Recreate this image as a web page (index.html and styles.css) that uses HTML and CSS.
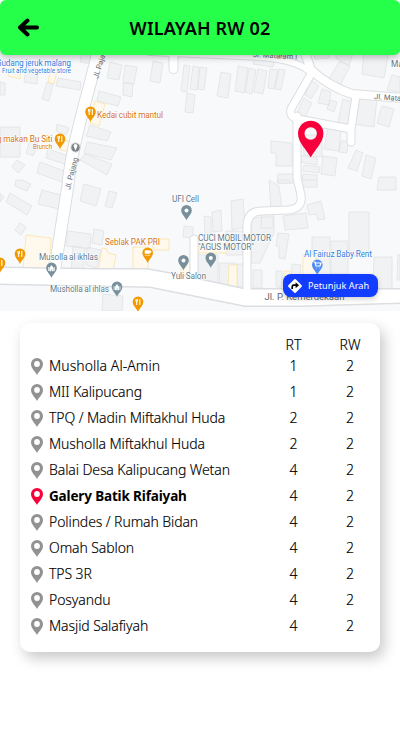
FILE: index.html
```html
<!DOCTYPE html>
<html lang="id">
<head>
<meta charset="utf-8">
<meta name="viewport" content="width=device-width, initial-scale=1">
<title>Wilayah RW 02</title>
<link rel="stylesheet" href="styles.css">
</head>
<body>
<header class="topbar">
  <svg class="back" width="24" height="20" viewBox="0 0 24 20"><path d="M21 9.500H4M11.500 2.500L4 9.500l7.500 7" fill="none" stroke="#000" stroke-width="4" stroke-linecap="round" stroke-linejoin="round"/></svg>
  <h1>WILAYAH RW 02</h1>
</header>

<section class="map">
<svg class="map-art" width="400" height="261" viewBox="0 50 400 261">
  <defs>
    <path id="drop" d="M0 0C-.8-3-5.300-6-5.300-10.200a5.300 5.300 0 0 1 10.600 0C5.300-6 .8-3 0 0Z"/>
    <g id="food"><use href="#drop" fill="#f29900"/><path d="M-2-13v2.500M-.6-13v2.500M-1.300-11v4M1.800-13v6" stroke="#fff" stroke-width="1.100"/></g>
    <g id="place"><use href="#drop" fill="#78909c"/><circle cy="-10" r="2" fill="#fff"/></g>
    <g id="mosque"><use href="#drop" fill="#78909c"/><path d="M-3-7v-4M3-7v-4M-1.800-7v-3L0-12.500 1.800-10v3H.6v-2H-.6v2Z" fill="#fff" stroke="#fff" stroke-width=".7"/></g>
  </defs>
  <rect y="50" width="400" height="261" fill="#f8f9fb"/>
  <g class="building">
    <path d="M82 50h12l-1 14-13-2ZM26 67l12 2-1 15-13-2ZM58 78l23 4-1 8-24-4ZM47 82l6 2-4 17-7-2ZM0 82l5 1v12H0ZM110 62l12 3-3 15-12-2ZM125 65l12 2-3 17-11-2ZM123 83l10 1-1 13-9-2ZM99 91l22 6-3 9-21-5ZM90 125l21 7-4 9-21-5ZM87 142l30 6-6 12-27-7ZM85 154l27 10-5 11-27-15ZM57 124l12 4-3 7-10-4ZM0 127h20v30H0ZM30 140l8 4-5 12-7-3ZM48 149l21 7-4 8-19-6ZM17 160l8 5-7 8-6-6ZM40 162l27 10-5 10-25-9Z"/>
    <path d="M153 61l10 2-3 20-10-2ZM184 65l6 1-3 26-6-1ZM193 66l6 1-2 23-7-1ZM200 67l7 1-3 22-6-1ZM187 93l8 2-2 18-8-1ZM221 72l10 2-3 24-11-2ZM238 66l10 2-4 25-9-2ZM249 68l7 2-4 24-7-2ZM258 69l9 2-4 23-9-2ZM270 69l8 1-4 19-6-1ZM279 69l6 1-4 20-6-1ZM254 59l20 2-1 6-20-3Z"/>
    <path d="M312 45h21l-4 13-14 1ZM340 61l10 5-10 20-12-6ZM336 50h18l-5 16-13-8ZM364 50h25l-5 28-22-4ZM392 75l8 2v15l-13-2ZM311 80l8 6-8 13-6-4ZM304 98l8 5-7 14-8-4ZM322 89l9 3-2 13-11-2ZM330 100l7 2-3 10-7-3ZM343 99l10 3-5 23-10-3ZM357 96l20 3-3 28-21-3ZM382 106l12 3-5 18-12-4ZM328 128l13 2-2 21-15-2ZM341 141h7l-1 12-8-1ZM302 135h20v22l-18-2ZM271 141l21 2v23h-16v-13h-5ZM299 155l18 3v7l-17-3ZM304 165l16 2-1 6-16-2ZM303 174l14 1v8l-15-2ZM323 156l14 2-2 18-14-2ZM356 150l7 3-6 18-9-3ZM366 155l10 3-5 21-9-3ZM379 177h17v13h-19ZM278 174h15v9h-16Z"/>
    <path d="M16 180h6l9 4-4 7-12-5ZM10 193l22 13-5 9-21-13ZM0 193l4 4-4 5ZM42 190l19 5-2 14-21-5ZM20 223l6 4-5 8-6-5ZM84 184l17 5-5 17-16-5ZM109 191l8 2-5 15-7-2ZM68 231l23 3-1 15-24-3ZM94 229l10 2-2 14-10-2ZM73 246l12 2-2 28-12-3ZM87 247l14 3-4 18-11-3ZM103 294l20 2-1 15h-20ZM184 226l9 1v11l-10-1ZM204 216l7 1v18l-6-1ZM212 212l9-2 1 21-9 1ZM231 201l12-2 2 28-13 3ZM226 231h17v24h-17ZM198 255h20v30l-20-1ZM219 263h17v25h-16ZM237 264h9l-1 22h-8ZM253 270h9v18h-9ZM251 219l10-2h13v16l-14 30h-9ZM262 212h11v16h-12ZM283 216l23-3 2 15-23 2ZM307 205l14-4 4 18-7 1-2-6-7 1ZM269 180l10 6 3 22-11 1ZM278 180h12v3h-12ZM302 180h15v7h-15ZM278 233l11 1-4 25-6-1v-12h-3ZM349 212h20v44h-20ZM312 237h18v38h-18ZM331 241h17v33h-17ZM374 257h18v32h-19ZM398 254l2 1v25h-3ZM292 264l9 1-2 21-8-1ZM276 271h6v16h-6Z"/>
  </g>
  <g class="shop">
    <path d="M10 65l11 3-1 11-12-3ZM52 64l6 2-4 18-6-2ZM95 101l10 3-6 22-9-3ZM65 140l7 3-3 9-10-3ZM26 235l25 3-1 33-27-2ZM102 248l5 1 1 4 8 2-4 20-14-2ZM133 247h15v24h-15ZM153 239h16v11h-16ZM182 260h8v22h-10ZM199 244h28v9h-28ZM229 265h8v23h-9ZM303 255h13v20h-13ZM284 271h6v14h-6Z"/>
  </g>
  <g class="road-edge">
    <path d="M99 48Q92 78 83 110Q70 160 68 185L54 274" stroke-width="13"/>
    <path d="M173.500 50V69" stroke-width="10"/>
    <path d="M150 52L262 57Q296 60 309 71" stroke-width="8"/>
    <path d="M304 50L311 70Q330 87 352 94L402 98" stroke-width="10"/>
    <path d="M311 74L291 109Q289 117 298 119L351 129V142M351 129L356 96" stroke-width="9"/>
    <path d="M297 116V178L301 195Q303 209 288 210L262 211Q248 211 247 225V294" stroke-width="9"/>
    <path d="M194 284V239" stroke-width="9"/>
    <path d="M-2 267.500L100 269H147L180 275L245 289H402V303L300 306H245L150 287L-2 284Z" stroke-width="2"/>
  </g>
  <g class="road">
    <path d="M99 48Q92 78 83 110Q70 160 68 185L54 274" stroke-width="11"/>
    <path d="M173.500 50V69" stroke-width="8"/>
    <path d="M150 52L262 57Q296 60 309 71" stroke-width="6"/>
    <path d="M304 50L311 70Q330 87 352 94L402 98" stroke-width="8"/>
    <path d="M311 74L291 109Q289 117 298 119L351 129V142M351 129L356 96" stroke-width="7"/>
    <path d="M297 116V178L301 195Q303 209 288 210L262 211Q248 211 247 225V294" stroke-width="7"/>
    <path d="M194 284V239" stroke-width="7"/>
  </g>
  <path d="M-2 268L100 269.500H147L180 275.500L245 289.500H402V302.500L300 305.500H245L150 286.500L-2 283.500Z" fill="#fff"/>
  <g class="street">
    <text transform="translate(98 79) rotate(-73)">Jl. Pajang</text>
    <text transform="translate(70 190) rotate(-76)">Jl. Pajang</text>
    <text transform="translate(253 57) rotate(3)" textLength="44">Jl. Mataram I</text>
    <text transform="translate(374 99) rotate(4)">Jl. Mataram</text>
    <text x="264.500" y="300" style="font-size:9.500px">Jl. P. Kemerdekaan</text>
  </g>
  <g class="label">
    <text class="blue" x="-4" y="65.500" textLength="75">Gudang jeruk malang</text>
    <text class="blue small" x="2" y="73" textLength="69">Fruit and vegetable store</text>
    <text class="orange" x="97" y="118" textLength="66">Kedai cubit mantul</text>
    <text class="orange" x="-26.500" y="141.500" textLength="79">Warung makan Bu Siti</text>
    <text class="orange small" x="33" y="148.500" textLength="19">Brunch</text>
    <text class="gray" x="391" y="66.500">Masjid</text>
    <text class="gray" x="39" y="260" textLength="59">Musolla al ikhlas</text>
    <text class="gray" x="50" y="292" textLength="59">Musholla al ihlas</text>
    <text class="orange" x="105" y="245" textLength="55">Seblak PAK PRI</text>
    <text class="gray" x="172" y="202" textLength="27">UFI Cell</text>
    <text class="gray" x="171" y="279" textLength="35">Yuli Salon</text>
    <text class="gray" x="198" y="240.500" textLength="73">CUCI MOBIL MOTOR</text>
    <text class="gray" x="198" y="249.500" textLength="56">"AGUS MOTOR"</text>
    <text class="blue" x="304" y="256.500" textLength="68">Al Fairuz Baby Rent</text>
  </g>
  <use href="#food" x="90.500" y="122"/>
  <use href="#food" x="60" y="149"/>
  <use href="#food" x="20" y="264"/>
  <use href="#food" x="0" y="273"/>
  <use href="#food" x="138" y="312"/>
  <use href="#drop" x="147.700" y="263" fill="#f29900"/>
  <path d="M145 250.500h4.500v3h-4.500ZM149.500 251h1.500v1.500h-1.500M144.800 255.300h5.500" fill="#fff" stroke="#fff" stroke-width=".6"/>
  <use href="#mosque" x="51.500" y="278"/>
  <use href="#mosque" x="117" y="297"/>
  <use href="#place" x="186.500" y="220.500"/>
  <use href="#place" x="183.500" y="270.500"/>
  <use href="#place" x="210.800" y="268"/>
  <use href="#drop" x="317.300" y="275" fill="#4f8df5"/>
  <path d="M313.500 262h1.500l1 4h4l1-3h-6M316.500 268h.5M319.500 268h.5" fill="none" stroke="#fff" stroke-width="1.200"/>
  <circle cx="75.500" cy="147.500" r="4.500" fill="#7c8185" stroke="#c9ccce"/>
  <path d="M75.500 150.500l-1.800-4a1.900 1.900 0 1 1 3.600 0Z" fill="#fff"/>
  <path fill="#f8003c" fill-rule="evenodd" d="M310.700 157.500C307 150 298 143 298 133.500a12.700 12.700 0 0 1 25.400 0C323.400 143 314.400 150 310.700 157.500ZM310.700 139.700a6.200 6.200 0 1 0 0-12.400 6.200 6.200 0 0 0 0 12.400Z"/>
</svg>
<a class="route">
  <svg width="16" height="16" viewBox="0 0 16 16"><rect x="2.800" y="2.800" width="10.400" height="10.400" rx="1" transform="rotate(45 8 8)" fill="#fff"/><path d="M5.200 11V8.800Q5.200 7.200 6.800 7.200H9" fill="none" stroke="#000" stroke-width="1.700"/><path d="M8.600 4.200L12 7.200 8.600 10.200Z"/></svg>
  <span>Petunjuk Arah</span>
</a>
</section>

<svg class="symbols" width="0" height="0"><symbol id="pin" viewBox="0 0 12 17"><path fill="currentColor" fill-rule="evenodd" d="M6 17C4.500 13.500 0 10.500 0 6a6 6 0 0 1 12 0C12 10.500 7.500 13.500 6 17ZM6 8.900a2.900 2.900 0 1 0 0-5.800 2.900 2.900 0 0 0 0 5.800Z"/></symbol></svg>
<main class="card">
  <div class="row head"><span class="name"></span><span>RT</span><span>RW</span></div>
  <div class="row"><svg class="pin"><use href="#pin"/></svg><span class="name wide">Musholla Al-Amin</span><span>1</span><span>2</span></div>
  <div class="row"><svg class="pin"><use href="#pin"/></svg><span class="name">MII Kalipucang</span><span>1</span><span>2</span></div>
  <div class="row"><svg class="pin"><use href="#pin"/></svg><span class="name">TPQ / Madin Miftakhul Huda</span><span>2</span><span>2</span></div>
  <div class="row"><svg class="pin"><use href="#pin"/></svg><span class="name">Musholla Miftakhul Huda</span><span>2</span><span>2</span></div>
  <div class="row"><svg class="pin"><use href="#pin"/></svg><span class="name">Balai Desa Kalipucang Wetan</span><span>4</span><span>2</span></div>
  <div class="row active"><svg class="pin"><use href="#pin"/></svg><span class="name">Galery Batik Rifaiyah</span><span>4</span><span>2</span></div>
  <div class="row"><svg class="pin"><use href="#pin"/></svg><span class="name">Polindes / Rumah Bidan</span><span>4</span><span>2</span></div>
  <div class="row"><svg class="pin"><use href="#pin"/></svg><span class="name">Omah Sablon</span><span>4</span><span>2</span></div>
  <div class="row"><svg class="pin"><use href="#pin"/></svg><span class="name">TPS 3R</span><span>4</span><span>2</span></div>
  <div class="row"><svg class="pin"><use href="#pin"/></svg><span class="name">Posyandu</span><span>4</span><span>2</span></div>
  <div class="row"><svg class="pin"><use href="#pin"/></svg><span class="name">Masjid Salafiyah</span><span>4</span><span>2</span></div>
</main>
</body>
</html>
```
FILE: styles.css
```css
* { box-sizing: border-box; }
body {
  margin: 0;
  min-height: 100vh;
  background: #fff;
  color: #000;
  font-family: "Noto Sans", "Open Sans", sans-serif;
}
.topbar {
  position: relative;
  z-index: 1;
  display: grid;
  grid-template-columns: 48px 1fr 48px;
  align-items: center;
  height: 55px;
  background: #26ff4a;
  border-radius: 6px;
  box-shadow: 0 2px 7px rgba(0, 0, 0, .28);
}
.back { margin-left: 16px; display: block; }
.topbar h1 {
  margin: 0;
  font-size: 18px;
  font-weight: 600;
  letter-spacing: .15px;
  text-align: center;
  white-space: nowrap;
}
.map { position: relative; height: 261px; margin-top: -5px; }
.map-art { display: block; }
.road-edge path { fill: none; stroke: #dcdee1; stroke-linecap: round; stroke-linejoin: round; }
.road path { fill: none; stroke: #fff; stroke-linecap: round; stroke-linejoin: round; }
.building path { fill: #f1f2f4; stroke: #e0e2e5; stroke-width: .8; }
.shop path { fill: #fef9ec; stroke: #fbe3a8; stroke-width: .8; }
.street { font: 7.5px Roboto, sans-serif; fill: #62676c; }
.label { font: 8.3px Roboto, sans-serif; stroke: #fff; stroke-width: 1.2px; }
.label text { paint-order: stroke; }
.label .small { font-size: 6.5px; }
.blue { fill: #2f7de1; }
.orange { fill: #d57316; }
.gray { fill: #5f7986; }
.route {
  position: absolute;
  right: 22px;
  bottom: 14px;
  width: 95px;
  height: 23px;
  padding-left: 4px;
  display: flex;
  align-items: center;
  gap: 5px;
  color: #fff;
  background: #123cff;
  border-radius: 8px;
  box-shadow: 0 2px 5px rgba(0, 0, 0, .2);
  font-size: 9.2px;
  white-space: nowrap;
}
.symbols { position: absolute; }
.card {
  width: 360px;
  height: 329px;
  margin: 12px 20px 0;
  padding: 13px 2px 0 11px;
  background: #fff;
  border-radius: 10px;
  box-shadow: 4px 6px 14px rgba(0, 0, 0, .22);
}
.row {
  display: grid;
  grid-template-columns: 12px 222px 57px 56px;
  align-items: center;
  height: 26px;
  font-size: 14px;
  font-weight: 350;
  line-height: 18px;
  -webkit-text-stroke: .15px #000;
}
.row > span:not(.name) { text-align: center; }
.head { height: 17px; }
.head .name { grid-column: span 2; }
.name { padding-left: 6px; white-space: nowrap; letter-spacing: -.1px; }
.name.wide { letter-spacing: .05px; }
.pin { width: 12px; height: 17px; color: #929292; }
.active .pin { color: #f8003c; }
.active .name { font-size: 13.5px; font-weight: 700; letter-spacing: -.15px; -webkit-text-stroke: 0; }
```
